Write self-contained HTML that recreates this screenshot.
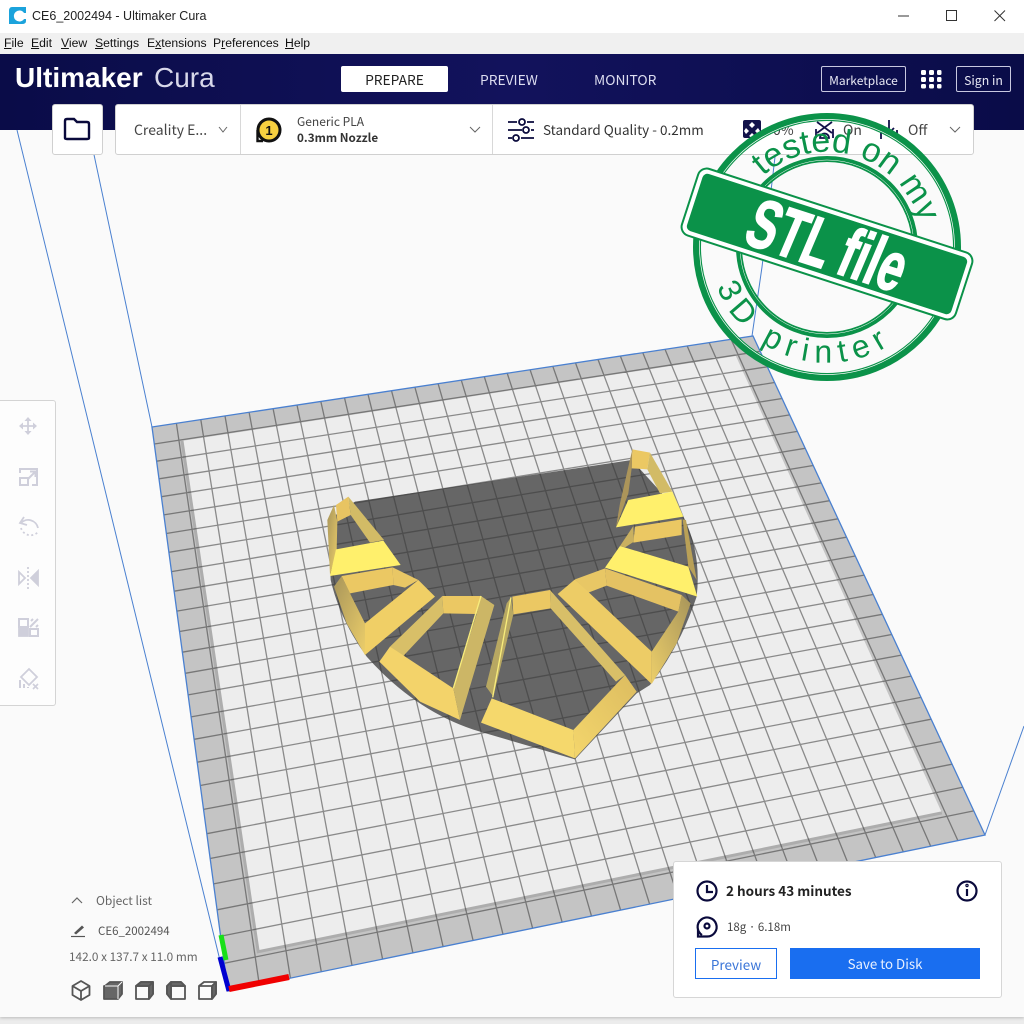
<!DOCTYPE html>
<html><head><meta charset="utf-8"><style>
html,body{margin:0;padding:0}
body{width:1024px;height:1024px;position:relative;overflow:hidden;background:#ececec;font-family:"Noto Sans CJK JP","Liberation Sans",sans-serif;color:#222}
.a{position:absolute;white-space:nowrap;line-height:1}
svg{position:absolute;left:0;top:0}
.win{font-family:"Liberation Sans",sans-serif}
.m{font-family:"Liberation Sans",sans-serif;font-size:12.2px;top:37px;color:#111}
.m u{text-decoration:underline}
</style></head><body>
<div class="a" style="left:0;top:0;width:1024px;height:1017px;background:#fafafa;box-shadow:0 1px 3px #bbb"></div>
<svg id="scene" width="1024" height="1024" viewBox="0 0 1024 1024">
<defs>
<linearGradient id="gL" x1="0" y1="0" x2="1" y2="1"><stop offset="0" stop-color="#a8955a"/><stop offset="1" stop-color="#ecce6a"/></linearGradient>
<linearGradient id="gR" x1="1" y1="0" x2="0" y2="1"><stop offset="0" stop-color="#a8955a"/><stop offset="1" stop-color="#ecce6a"/></linearGradient>
<linearGradient id="gF" x1="1" y1="0" x2="0" y2="1"><stop offset="0" stop-color="#dcbc60"/><stop offset="1" stop-color="#f4d66c"/></linearGradient>
</defs>
<g fill="none" stroke="#4a80d0" stroke-width="1">
<path d="M17 130L226 985M93 150L152 427M775 157L762 267L752 336M985 835L1024 726"/>
</g>
<polygon points="152,427 753,336 985,835 228,991" fill="#c4c4c4"/>
<polygon id="inner" fill="#ededed" points="178,443 739,358 943,818 257,951"/>
<path id="innerEdge" d="M178 443L257 951L943 818" stroke="#adadad" stroke-width="3" fill="none"/>
<g transform="translate(310 440) scale(.33333)">
<path fill="#666" d="M135 185L965 60L1120 230Q1175 340 1160 470Q1110 620 1020 735L980 760L795 958L510 875Q320 818 170 650Q90 540 62 420L55 240Z"/>
</g>
<g id="grid" fill="none" stroke="#383838" stroke-opacity=".55" stroke-width="1.300"></g>
<polygon points="152,427 753,336 985,835 228,991" fill="none" stroke="#4a80d0" stroke-width="1.300"/>
<g transform="translate(310 440) scale(.33333)">
<polygon fill="url(#gL)" points="72,195 82,245 80,330 60,405 52,240"/>
<polygon fill="#e8c462" points="78,195 115,170 122,225 82,245"/>
<polygon fill="#d2bb66" points="115,170 222,300 180,308 122,225"/>
<polygon fill="#fff06c" points="78,328 220,302 272,375 60,408"/>
<polygon fill="url(#gL)" points="72,440 95,408 120,460 165,550 165,645 110,550"/>
<polygon fill="#ebc863" points="95,408 248,382 250,435 120,460"/>
<polygon fill="#e9c765" points="248,382 325,420 285,443 250,435"/>
<polygon fill="#f0cf66" points="165,550 325,420 375,470 165,645"/>
<polygon fill="#ebc863" points="397,468 513,468 500,522 400,520"/>
<polygon fill="#d8bf68" points="397,468 400,520 278,650 240,620"/>
<polygon fill="#f3d36a" points="240,620 430,745 450,840 330,785 208,665"/>
<polygon fill="#ccb666" points="500,522 513,468 553,495 450,840 430,745"/>
<path d="M513 468L430 745" stroke="#f8ec7c" stroke-width="4"/>
<polygon fill="#ebc863" points="607,470 720,450 722,505 610,523"/>
<polygon fill="#b8a862" points="603,472 610,523 550,770 528,740 590,490"/>
<path d="M603 472L548 772" stroke="#f8ec7c" stroke-width="4"/>
<polygon fill="#d8bf68" points="720,450 945,705 918,725 722,505"/>
<polygon fill="#f5d86c" points="545,775 790,870 795,955 513,848"/>
<polygon fill="url(#gF)" points="790,870 945,705 980,755 795,955"/>
<polygon fill="#e8c765" points="795,418 885,385 890,437 835,458"/>
<polygon fill="url(#gR)" points="1025,635 1105,515 1115,465 1142,490 1100,610 1025,732"/>
<polygon fill="#edcc66" points="743,462 795,418 1025,635 1025,732"/>
<polygon fill="#e4c263" points="885,385 1115,465 1105,515 890,437"/>
<polygon fill="#fff06c" points="930,318 1135,380 1162,470 885,383"/>
<polygon fill="#ebc863" points="975,260 1115,238 1115,285 970,308"/>
<polygon fill="#c9b060" points="970,258 930,318 945,322 972,305"/>
<polygon fill="#b9a057" points="1118,238 1128,240 1160,420 1135,380"/>
<polygon fill="#ebc863" points="967,28 1020,38 1012,88 965,85"/>
<polygon fill="#ac955a" points="967,28 965,85 955,160 918,262 930,190"/>
<polygon fill="#d2bb66" points="1020,38 1087,155 1050,160 1012,88"/>
<polygon fill="#fff06c" points="955,180 1087,155 1120,230 918,262"/>
</g>
<path d="M221 935L226 960" stroke="#18e018" stroke-width="5"/>
<path d="M220 957L229 991" stroke="#0000d0" stroke-width="5"/>
<path d="M229 989L289 977" stroke="#f00000" stroke-width="6"/>
</svg>

<div class="a" style="left:0;top:0;width:1024px;height:33px;background:#fff"></div>
<div class="a" style="left:0;top:33px;width:1024px;height:21px;background:#f0f0f0"></div>
<div class="a" style="left:0;top:54px;width:1024px;height:76px;background:linear-gradient(90deg,#0a0c48,#12125c 50%,#0a0c48)"></div>
<div class="a win" style="left:32px;top:10px;font-size:12.5px;color:#222">CE6_2002494 - Ultimaker Cura</div>
<span class="a m" style="left:4px"><u>F</u>ile</span><span class="a m" style="left:31px"><u>E</u>dit</span><span class="a m" style="left:61px"><u>V</u>iew</span><span class="a m" style="left:95px"><u>S</u>ettings</span><span class="a m" style="left:147px">E<u>x</u>tensions</span><span class="a m" style="left:213px">P<u>r</u>eferences</span><span class="a m" style="left:285px"><u>H</u>elp</span>

<div class="a" style="left:15px;top:64px;font-size:28px;font-weight:700;color:#fff;font-family:'Liberation Sans',sans-serif">Ultimaker</div>
<div class="a" style="left:154px;top:64px;font-size:28px;color:#d8d8ea;font-family:'Liberation Sans',sans-serif">Cura</div>
<div class="a" style="left:341px;top:66px;width:107px;height:26px;background:#fff;border-radius:2px;text-align:center;line-height:27px;font-size:13.8px;color:#222">PREPARE</div>
<div class="a" style="left:480px;top:73px;font-size:13.8px;color:#dcdcf0">PREVIEW</div>
<div class="a" style="left:594px;top:73px;font-size:13.8px;color:#dcdcf0">MONITOR</div>
<div class="a" style="left:821px;top:66px;width:83px;height:24px;border:1px solid #c8c8e0;border-radius:2px;text-align:center;line-height:27px;font-size:12px;color:#e8e8f4">Marketplace</div>
<div class="a" style="left:956px;top:66px;width:53px;height:24px;border:1px solid #c8c8e0;border-radius:2px;text-align:center;line-height:27px;font-size:12.3px;color:#e8e8f4">Sign in</div>

<div class="a" style="left:52px;top:104px;width:49px;height:49px;background:#fff;border:1px solid #d0d0d0;border-radius:3px"></div>
<div class="a" style="left:115px;top:104px;width:857px;height:49px;background:#fff;border:1px solid #d0d0d0;border-radius:3px"></div>
<div class="a" style="left:240px;top:105px;width:1px;height:49px;background:#d8d8d8"></div>
<div class="a" style="left:492px;top:105px;width:1px;height:49px;background:#d8d8d8"></div>
<div class="a" style="left:134px;top:123px;font-size:14px;color:#444">Creality E...</div>
<div class="a" style="left:297px;top:116px;font-size:12px;color:#444">Generic PLA</div>
<div class="a" style="left:297px;top:132px;font-size:11.7px;font-weight:700;color:#333">0.3mm Nozzle</div>
<div class="a" style="left:543px;top:123px;font-size:13.5px;color:#333">Standard Quality - 0.2mm</div>
<div class="a" style="left:773px;top:123px;font-size:14px;color:#444">0%</div>
<div class="a" style="left:843px;top:123px;font-size:14px;color:#444">On</div>
<div class="a" style="left:908px;top:123px;font-size:14px;color:#444">Off</div>

<div class="a" style="left:0;top:400px;width:55px;height:304px;background:#fdfdfd;border:1px solid #d4d4d4;border-left:0;border-radius:0 3px 3px 0"></div>

<div class="a" style="left:96px;top:895px;font-size:12px;color:#666">Object list</div>
<div class="a" style="left:98px;top:926px;font-size:11.5px;color:#555">CE6_2002494</div>
<div class="a" style="left:69px;top:951px;font-size:11.8px;color:#666">142.0 x 137.7 x 11.0 mm</div>

<div class="a" style="left:673px;top:861px;width:327px;height:135px;background:#fff;border:1px solid #d6d6d6;border-radius:3px"></div>
<div class="a" style="left:726px;top:884px;font-size:13.5px;font-weight:700;color:#222">2 hours 43 minutes</div>
<div class="a" style="left:727px;top:922px;font-size:11.5px;color:#444">18g · 6.18m</div>
<div class="a" style="left:695px;top:948px;width:80px;height:29px;border:1px solid #196ef0;text-align:center;line-height:30px;font-size:13.5px;color:#3a75d8;background:#fff">Preview</div>
<div class="a" style="left:790px;top:948px;width:190px;height:31px;background:#196ef0;text-align:center;line-height:32px;font-size:13.3px;color:#e8f0ff">Save to Disk</div>

<svg width="1024" height="1024" viewBox="0 0 1024 1024">
<path d="M12 7H26V13L24 13A5.5 5.5 0 1 0 24 19L26 19V21Q26 24 22 24H9V11Q9 7 12 7Z" fill="#1ba3dc"/>
<path d="M898 16H909" stroke="#333" stroke-width="1"/>
<rect x="946.500" y="10.500" width="10" height="10" fill="none" stroke="#333"/>
<path d="M994.500 10.500L1005 21M1005 10.500L994.500 21" stroke="#333" fill="none"/>
<g fill="#fff"><rect x="921" y="70" width="5" height="5" rx="1.500"/><rect x="929" y="70" width="5" height="5" rx="1.500"/><rect x="937" y="70" width="4.500" height="5" rx="1.500"/><rect x="921" y="77" width="5" height="5" rx="1.500"/><rect x="929" y="77" width="5" height="5" rx="1.500"/><rect x="937" y="77" width="4.500" height="5" rx="1.500"/><rect x="921" y="84" width="5" height="4.500" rx="1.500"/><rect x="929" y="84" width="5" height="4.500" rx="1.500"/><rect x="937" y="84" width="4.500" height="4.500" rx="1.500"/></g>
<path d="M65 138V121Q65 119 67 119H74L77 122H87Q89 122 89 124V138Q89 139 87 139H67Q65 139 65 138Z" fill="none" stroke="#0a0a3c" stroke-width="2.400"/>
<path d="M219 127L223 132L227 127M470 127L475 132L480 127M950 127L955 132L960 127" fill="none" stroke="#666" stroke-width="1"/>
<circle cx="269" cy="130" r="11" fill="#f7d040" stroke="#111" stroke-width="3"/><path d="M257.500 130V141H263" fill="none" stroke="#111" stroke-width="2.400"/>
<text x="269" y="135" font-family="Liberation Sans" font-weight="700" font-size="13" text-anchor="middle" fill="#111">1</text>
<g fill="none" stroke="#0a0a3c" stroke-width="1.800"><path d="M508 122H517M527 122H534M508 130H522M531 130H534M508 138H512M521 138H534"/><circle cx="522" cy="122" r="3"/><circle cx="526" cy="130" r="3"/><circle cx="516" cy="138" r="3"/></g>
<rect x="743" y="120" width="18" height="18" rx="2" fill="#12124a"/><g fill="#fff"><path d="M752 122l3 3-3 3-3-3zM746 128l3 3-3 3-2-3zM758 128l2 3-2 3-3-3zM752 133l3 3-3 2-3-2z"/></g>
<path d="M817 122L832 133M832 122L817 133M816 129V138M833 129V138M820 138A4 4 0 0 1 829 138Z" fill="none" stroke="#12124a" stroke-width="1.800"/>
<path d="M889 120V133M884 128L889 133L894 128M881 130V139M897 130V134" fill="none" stroke="#12124a" stroke-width="1.800"/>
<path d="M72 903L77 898L82 903" fill="none" stroke="#666" stroke-width="1.200"/>
<path d="M71 936.500H85" stroke="#555" stroke-width="1.200"/><path d="M74 933L82 925.500L84 927.500L76 934.500Z" fill="#555"/>
<g fill="none" stroke="#555" stroke-width="1.800" stroke-linejoin="round">
<path d="M81 981L89.500 986V995L81 1000L72.500 995V986ZM72.500 986L81 991L89.500 986M81 991V1000"/>
<path d="M105 986L110 982H122V994L118 999H104V986Z" fill="#666"/><path d="M105 986H118V999M118 986L122 982" stroke="#fafafa" stroke-width="1"/>
<path d="M136 986L141 982H153V994L149 999H136ZM136 986H149V999M149 986L153 982L153 994L149 999Z"/><path d="M149 986L153 982V994L149 999Z M136 986L141 982H153L149 986Z" fill="#666"/>
<path d="M167 986L171 982H181L185 986V999H171L167 994ZM171 986H185M171 986V999"/><path d="M167 986L171 982V986H171V999L167 994Z" fill="#666"/><path d="M171 982H181L185 986H171Z" fill="#666"/>
<path d="M199 986L204 982H216V994L212 999H199ZM199 986H212V999M212 986L216 982"/><path d="M212 986L216 982V994L212 999Z" fill="#666"/>
</g>
<g fill="none" stroke="#cfcfdb" stroke-width="1.800">
<path d="M28 418V434M20 426H36"/><path d="M24.500 421L28 417L31.500 421ZM24.500 431L28 435L31.500 431ZM23 422.500L19 426L23 429.500ZM33 422.500L37 426L33 429.500Z" fill="#cfcfdb" stroke="none"/>
<path d="M20 473V469H37V485H32M28 479L35 472M30 471.500H35.500V477" stroke-width="2"/><rect x="20" y="478" width="8" height="7" stroke-width="2"/>
<path d="M21 528A10 10 0 0 0 38 532" stroke-dasharray="2 2.500"/><path d="M24 517L20 523L27 525"/><path d="M21 523A10 10 0 0 1 38 528"/>
<path d="M28 567V591" stroke-dasharray="2 2"/><path d="M19 572L25 578L19 584Z"/><path d="M38 571L31 578L38 585Z" fill="#cfcfdb"/>
<rect x="19" y="619" width="9" height="8" stroke-width="2"/><rect x="19" y="628" width="9" height="8" fill="#cfcfdb"/><rect x="30" y="629" width="8" height="7" stroke-width="2"/><path d="M30 627L38 619M31 621L33 619M36 627L38 625" stroke-width="2"/>
<path d="M29 669L37 677L29 685L21 677Z"/><path d="M20 680V688M24 684V688M28 687V688" stroke-width="2"/><path d="M33 684L38 689M38 684L33 689" stroke-width="1.600"/>
</g>
<g fill="none" stroke="#0a0a3c" stroke-width="2.200">
<circle cx="707" cy="891" r="9.500"/><path d="M707 885V892H713"/>
<circle cx="967" cy="891" r="9.500"/><path d="M967 889V896"/><circle cx="967" cy="885.500" r=".6"/>
<path d="M702 935A9.500 9.500 0 1 1 707 936.500H698V929"/><circle cx="707" cy="926" r="2.500"/>
</g>
</svg>

<svg width="1024" height="1024" viewBox="0 0 1024 1024">
<g fill="none">
<circle cx="827" cy="247" r="130" stroke="#0b9249" stroke-width="8"/>
<circle cx="827" cy="247" r="127.500" stroke="#fff" stroke-width=".7"/>
<circle cx="827" cy="247" r="88" stroke="#0b9249" stroke-width="6"/>
<circle cx="827" cy="247" r="87" stroke="#fff" stroke-width=".5"/>
<path id="arcT" d="M763 176A96 96 0 0 1 913 290"/>
<path id="arcB" d="M717 287A118 118 0 0 0 928 306"/>
</g>
<text font-family="Liberation Sans" font-size="34" fill="#0b9249"><textPath href="#arcT">tested on my</textPath></text>
<text font-family="Liberation Sans" font-size="32" fill="#0b9249" letter-spacing="7.300"><textPath href="#arcB">3D printer</textPath></text>
<g transform="rotate(18 827 244)">
<rect x="682" y="208" width="290" height="72" rx="10" fill="#0b9249"/>
<rect x="684" y="210" width="286" height="68" rx="8" fill="#fff"/>
<rect x="688" y="214" width="278" height="60" rx="5" fill="#0b9249"/>
<g transform="translate(826 269) skewX(-5) scale(.645 1)"><text font-family="Liberation Sans" font-weight="700" font-size="70" fill="#fff" text-anchor="middle" stroke="#fff" stroke-width="1.500">STL file</text></g>
</g>
</svg>
<script>
var Q=[[152,427],[753,336],[985,835],[228,991]],N=26;
var x0=Q[0][0],y0=Q[0][1],x1=Q[1][0],y1=Q[1][1],x2=Q[2][0],y2=Q[2][1],x3=Q[3][0],y3=Q[3][1];
var dx1=x1-x2,dx2=x3-x2,sx=x0-x1+x2-x3,dy1=y1-y2,dy2=y3-y2,sy=y0-y1+y2-y3,D=dx1*dy2-dx2*dy1;
var g=(sx*dy2-dx2*sy)/D,h=(dx1*sy-sx*dy1)/D,a=x1-x0+g*x1,b=x3-x0+h*x3,c=x0,d=y1-y0+g*y1,e=y3-y0+h*y3,f=y0;
function P(u,v){var w=g*u+h*v+1;return ((a*u+b*v+c)/w).toFixed(1)+" "+((d*u+e*v+f)/w).toFixed(1)}
var s="";for(var i=1;i<N;i++){var t=i/N;s+="M"+P(t,0)+"L"+P(t,1)+"M"+P(0,t)+"L"+P(1,t)}
var p=document.createElementNS("http://www.w3.org/2000/svg","path");p.setAttribute("d",s);document.getElementById("grid").appendChild(p);
var L=.043,R=.957,T=.041,B=.955;
document.getElementById("inner").setAttribute("points",[P(L,T),P(R,T),P(R,B),P(L,B)].join(" ").replace(/(\S+) (\S+) (\S+) (\S+) (\S+) (\S+) (\S+) (\S+)/,"$1,$2 $3,$4 $5,$6 $7,$8"));
document.getElementById("innerEdge").setAttribute("d","M"+P(L,T)+"L"+P(L,B)+"L"+P(R,B));
</script>
</body></html>
